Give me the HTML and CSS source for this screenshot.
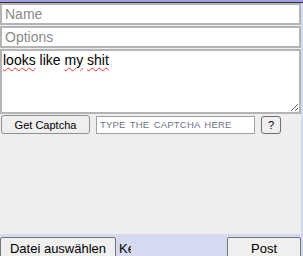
FILE: index.html
```html
<!DOCTYPE html>
<html lang="de">
<head>
  <meta charset="UTF-8" />
  <meta name="viewport" content="width=device-width, initial-scale=1.0"/>
  <title>Post Form</title>
  <link rel="stylesheet" href="styles.css">
</head>
<body>

  <div class="topbar"></div>

  <form class="post-form" id="post-form">
    <input class="field" type="text" placeholder="Name">
    <input class="field" type="text" placeholder="Options">
    <div class="field comment" contenteditable="true"><span class="typo">looks</span> like <span class="typo">my</span> <span class="typo">shit</span></div>
    <div class="captcha-row">
      <button type="button" class="btn captcha-btn">Get Captcha</button>
      <input class="captcha-input" type="text" placeholder="TYPE THE CAPTCHA HERE">
      <button type="button" class="btn help-btn">?</button>
    </div>
  </form>

  <div class="file-row">
    <div class="file-pick">
      <button type="button" class="btn file-btn">Datei auswählen</button>
      <span class="file-name">Keine Datei ausgewählt</span>
    </div>
    <button type="submit" form="post-form" class="btn post-btn">Post</button>
  </div>

</body>
</html>
```

FILE: styles.css
```css
* {margin:0; padding:0; box-sizing:border-box;}
body {
  font-family: "Liberation Sans", Arial, sans-serif;
  background: #d6daf0;
  width: 303px;
  height: 256px;
  overflow: hidden;
}

.topbar {
  height: 3px;
  background: #a29de9;
  border-bottom: 1px solid #333;
}

.post-form {
  width: 301px;
  height: 231px;
  background: #eeeeee;
  display: flex;
  flex-direction: column;
  gap: 1px;
}

.field {
  width: 301px;
  height: 22px;
  border: 2px solid #b4b4b4;
  background: #fff;
  font-family: inherit;
  font-size: 14px;
  padding: 0 3px;
  color: #000;
  outline: none;
}

.field::placeholder {color: #8a8a8a;}

.comment {
  height: 65px;
  padding: 1px 1px;
  line-height: 16px;
  resize: both;
  overflow: auto;
}

.typo {
  text-decoration: underline wavy #ee3333;
  text-decoration-thickness: 1px;
  text-underline-offset: 2px;
}

.captcha-row {
  display: flex;
  align-items: center;
  padding: 0 0 0 1px;
  height: 19px;
}

.btn {
  font-family: inherit;
  color: #000;
  background: #efefef;
  border: 1px solid #8f8f8f;
  border-radius: 3px;
}

.captcha-btn {
  width: 89px;
  height: 19px;
  font-size: 11px;
}

.captcha-input {
  margin-left: 6px;
  width: 159px;
  height: 18px;
  border: 1px solid #a0a0a0;
  background: #fff;
  font-family: inherit;
  font-size: 9.5px;
  letter-spacing: 0.2px;
  word-spacing: 1.5px;
  padding: 0 3px;
  outline: none;
}

.captcha-input::placeholder {color: #6c7488;}

.help-btn {
  margin-left: 6px;
  width: 20px;
  height: 18px;
  font-size: 11px;
  border-color: #707070;
}

.file-row {
  display: flex;
  justify-content: space-between;
  align-items: flex-start;
  width: 301px;
  padding-top: 3px;
}

.file-pick {
  display: flex;
  align-items: center;
  white-space: nowrap;
}

.file-btn {
  flex: none;
  width: 116px;
  height: 22px;
  font-size: 13px;
  border-radius: 2px;
  border-color: #767676;
}

.file-name {
  display: block;
  width: 12px;
  overflow: hidden;
  font-size: 13px;
  margin-left: 3px;
}

.post-btn {
  width: 74px;
  height: 22px;
  font-size: 13px;
  border-radius: 2px;
  border-color: #767676;
}
```
